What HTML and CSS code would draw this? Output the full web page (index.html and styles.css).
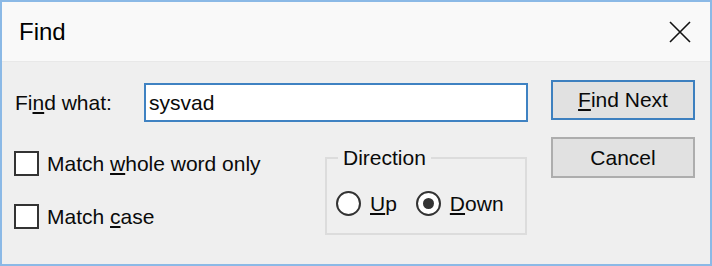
FILE: index.html
```html
<!DOCTYPE html>
<html>
<head>
<meta charset="utf-8">
<link rel="stylesheet" href="styles.css">
</head>
<body>
<div class="window">
  <div class="titlebar">
    <span class="title">Find</span>
    <svg class="close" width="22" height="22" viewBox="0 0 22 22"><path d="M1 1 L21 21 M21 1 L1 21" stroke="#111" stroke-width="1.6" fill="none"/></svg>
  </div>
  <div class="content">
    <div class="main">
      <div class="row-find">
        <span class="lbl">Fi<u>n</u>d what:</span>
        <div class="input">sysvad</div>
      </div>
      <div class="row-options">
        <div class="checks">
          <div class="check"><span class="box"></span><span>Match <u>w</u>hole word only</span></div>
          <div class="check second"><span class="box"></span><span>Match <u>c</u>ase</span></div>
        </div>
        <fieldset class="dir">
          <legend>Direction</legend>
          <div class="radios">
            <div class="radio"><span class="circle"></span><span><u>U</u>p</span></div>
            <div class="radio"><span class="circle on"></span><span><u>D</u>own</span></div>
          </div>
        </fieldset>
      </div>
    </div>
    <div class="buttons">
      <div class="btn default"><span><u>F</u>ind Next</span></div>
      <div class="btn cancel"><span>Cancel</span></div>
    </div>
  </div>
</div>
</body>
</html>
```

FILE: styles.css
```css
html, body {
  margin: 0;
  padding: 0;
}
body {
  font-family: "Liberation Sans", Arial, sans-serif;
  font-size: 21px;
  color: #0a0a0a;
}
u {
  text-underline-offset: 2px;
}
.window {
  width: 712px;
  height: 266px;
  box-sizing: border-box;
  border: 2px solid #8bb9e6;
  background: #efefef;
  display: flex;
  flex-direction: column;
}
.titlebar {
  height: 60px;
  box-sizing: border-box;
  background: #f9f9f9;
  display: flex;
  align-items: center;
  justify-content: space-between;
  padding: 0 19px 0 17px;
  border-bottom: 1px solid #e8e8e8;
}
.title {
  font-size: 24px;
  color: #000;
}
.close {
  display: block;
}
.content {
  display: flex;
  padding: 18px 15px 0 12px;
}
.main {
  width: 514px;
}
.row-find {
  display: flex;
  align-items: center;
  margin-top: 3px;
}
.lbl {
  padding-left: 1px;
}
.input {
  margin-left: auto;
  width: 384px;
  height: 39px;
  box-sizing: border-box;
  border: 2px solid #3f82c2;
  background: #fff;
  padding-left: 3px;
  display: flex;
  align-items: center;
  font-size: 21px;
}
.row-options {
  display: flex;
}
.checks {
  padding-top: 29px;
}
.check {
  display: flex;
  align-items: center;
  gap: 8px;
  height: 25px;
}
.check.second {
  margin-top: 28px;
}
.box {
  width: 25px;
  height: 25px;
  box-sizing: border-box;
  border: 2px solid #333;
  background: #fff;
}
.dir {
  margin: 24px 1px 0 auto;
  width: 202px;
  box-sizing: border-box;
  border: 2px solid #dcdcdc;
  padding: 21px 9px 17px 9px;
}
.dir legend {
  font-size: 21px;
  line-height: 24px;
  padding: 0 5px;
  margin-left: 2px;
}
.radios {
  display: flex;
  align-items: center;
  gap: 19px;
}
.radio {
  display: flex;
  align-items: center;
  gap: 9px;
  height: 25px;
}
.circle {
  width: 25px;
  height: 25px;
  box-sizing: border-box;
  border: 2px solid #333;
  border-radius: 50%;
  background: #fff;
  display: flex;
  align-items: center;
  justify-content: center;
}
.circle.on::after {
  content: "";
  width: 11px;
  height: 11px;
  border-radius: 50%;
  background: #333;
}
.buttons {
  width: 144px;
  margin-left: 23px;
  display: flex;
  flex-direction: column;
  gap: 17px;
}
.btn {
  height: 40px;
  box-sizing: border-box;
  background: #e1e1e1;
  border: 2px solid #adadad;
  display: flex;
  align-items: center;
  justify-content: center;
}
.btn.default {
  border-color: #3d80bf;
}
.btn.cancel {
  height: 41px;
}
```
